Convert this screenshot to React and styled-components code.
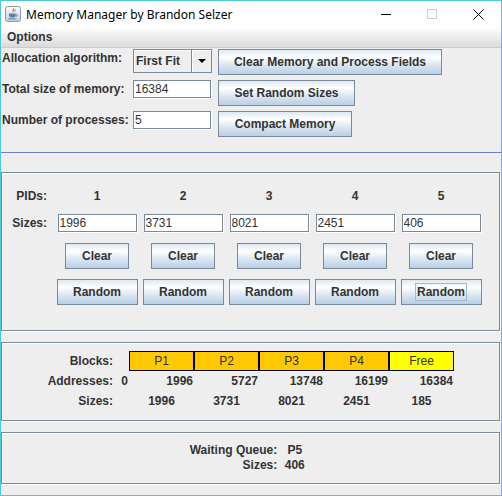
import React from "react";
import styled, { createGlobalStyle } from "styled-components";

const GlobalStyle = createGlobalStyle`
  html, body {
    margin: 0;
    padding: 0;
    background: #ffffff;
  }
  body {
    font-family: "Liberation Sans", Arial, sans-serif;
  }
  * {
    box-sizing: border-box;
  }
`;

const Window = styled.div`
  width: 502px;
  height: 496px;
  border: 1px solid #4fc9d3;
  background: #eeeeee;
  display: flex;
  flex-direction: column;
  overflow: hidden;
  color: #333333;
  font-size: 12px;
`;

const TitleBar = styled.div`
  height: 26px;
  flex-shrink: 0;
  background: #ffffff;
  display: flex;
  align-items: center;
`;

const AppIcon = styled.svg`
  margin-left: 4px;
  flex-shrink: 0;
`;

const TitleText = styled.span`
  flex: 1;
  margin-left: 5px;
  font-family: "Noto Sans", "Open Sans", sans-serif;
  font-size: 12px;
  color: #000000;
  white-space: nowrap;
`;

const CaptionButton = styled.div`
  width: 46px;
  height: 26px;
  display: flex;
  align-items: center;
  justify-content: center;
`;

const MenuBar = styled.div`
  height: 21px;
  flex-shrink: 0;
  background: linear-gradient(#ffffff, #dadada);
  border-bottom: 1px solid #cccccc;
  display: flex;
  align-items: center;
`;

const MenuItem = styled.span`
  padding-left: 6px;
  font-weight: bold;
  font-size: 12px;
  color: #333333;
`;

const Content = styled.div`
  flex: 1;
  display: flex;
  flex-direction: column;
  padding-top: 1px;
`;

const TopRow = styled.div`
  display: flex;
  align-items: flex-start;
  height: 31px;
  padding-left: 1px;
`;

const TopLabel = styled.div`
  width: 131px;
  line-height: 19px;
  font-weight: bold;
  white-space: nowrap;
`;

const Combo = styled.div`
  width: 79px;
  height: 24px;
  margin-right: 6px;
  border: 1px solid #7a8a99;
  background: #eeeeee;
  display: flex;
`;

const ComboValue = styled.div`
  flex: 1;
  padding-left: 2px;
  line-height: 22px;
  font-weight: bold;
  box-shadow: inset 1px 1px 0 #ffffff;
  border-right: 1px solid #7a8a99;
`;

const ComboArrow = styled.div`
  width: 19px;
  display: flex;
  align-items: center;
  justify-content: center;
  box-shadow: inset 1px 1px 0 #ffffff;
`;

const Field = styled.input`
  width: ${(p) => p.$w || 78}px;
  height: 18px;
  margin: 0 ${(p) => p.$mr || 0}px 0 0;
  padding: 0 1px;
  border: 1px solid #7a8a99;
  box-shadow: 1px 1px 0 #ffffff;
  background: #ffffff;
  outline: none;
  font-family: "Liberation Sans", Arial, sans-serif;
  font-size: 12px;
  color: #333333;
`;

const Button = styled.button`
  width: ${(p) => p.$w}px;
  height: 26px;
  padding: 0;
  border: 1px solid #7a8a99;
  border-radius: 0;
  background: linear-gradient(#dde8f3 0%, #ffffff 30%, #dde8f3 60%, #b8cfe5 100%);
  font-family: "Liberation Sans", Arial, sans-serif;
  font-size: 12px;
  font-weight: bold;
  color: #333333;
  display: flex;
  align-items: center;
  justify-content: center;
`;

const FocusRing = styled.span`
  border: 1px solid #a3b8cc;
  padding: 1px 1px;
  line-height: 14px;
`;

const Separator = styled.div`
  height: 1px;
  margin-top: 10px;
  background: #6382bf;
`;

const Panel = styled.div`
  width: 499px;
  height: ${(p) => p.$h}px;
  margin-top: ${(p) => p.$mt}px;
  padding-top: ${(p) => p.$pt}px;
  border: 1px solid #7a8a99;
  box-shadow: inset 1px 1px 0 #ffffff, 1px 1px 0 #ffffff;
  display: flex;
  flex-direction: column;
`;

const GridRow = styled.div`
  display: grid;
  grid-template-columns: 52px repeat(5, 86px);
  align-items: center;
  justify-items: center;
  height: ${(p) => p.$h}px;
  margin-top: ${(p) => p.$mt || 0}px;
`;

const RowLabel = styled.div`
  justify-self: stretch;
  text-align: right;
  padding-right: 7px;
  font-weight: bold;
`;

const Bold = styled.span`
  font-weight: bold;
`;

const MapRow = styled.div`
  display: flex;
  align-items: center;
  height: 20px;
  line-height: 20px;
`;

const MapLabel = styled.div`
  width: 111px;
  text-align: right;
  font-weight: bold;
`;

const LeadCell = styled.div`
  width: 16px;
  text-align: right;
  padding-right: 1px;
  font-weight: bold;
`;

const Block = styled.div`
  width: 65px;
  height: 20px;
  border: 1px solid #000000;
  background: ${(p) => p.$color};
  text-align: center;
  line-height: 18px;
`;

const AddrCell = styled.div`
  width: 65px;
  text-align: right;
  padding-right: 1px;
  font-weight: bold;
`;

const SizeCell = styled.div`
  width: 65px;
  text-align: center;
  font-weight: bold;
`;

const QueueGrid = styled.div`
  display: grid;
  grid-template-columns: auto 33px;
  column-gap: 1px;
  justify-content: center;
  line-height: 15px;
  font-weight: bold;
`;

const QueueLabel = styled.div`
  text-align: right;
`;

const QueueValue = styled.div`
  text-align: center;
`;

const sizes = [1996, 3731, 8021, 2451, 406];

const blocks = [
  { label: "P1", color: "#ffc800", addr: 1996, size: 1996 },
  { label: "P2", color: "#ffc800", addr: 5727, size: 3731 },
  { label: "P3", color: "#ffc800", addr: 13748, size: 8021 },
  { label: "P4", color: "#ffc800", addr: 16199, size: 2451 },
  { label: "Free", color: "#ffff00", addr: 16384, size: 185 },
];

const JavaIcon = () => (
  <AppIcon width="16" height="16" viewBox="0 0 16 16">
    <defs>
      <linearGradient id="jframe" x1="0" y1="0" x2="0" y2="1">
        <stop offset="0" stopColor="#fbfcfd" />
        <stop offset="1" stopColor="#c6d0dc" />
      </linearGradient>
    </defs>
    <rect x="0.5" y="0.5" width="15" height="15" rx="2" fill="url(#jframe)" stroke="#8b99aa" />
    <path d="M8.6 2.4c1.2 1.1-1.6 2.1-.4 3.6" stroke="#e0531f" fill="none" strokeWidth="1.1" />
    <path d="M10.2 3.4c.8.9-1 1.5-.2 2.5" stroke="#e76f00" fill="none" strokeWidth="0.9" />
    <path d="M4 7.6h6.6v1.6c0 1.5-1.4 2.4-3.3 2.4S4 10.7 4 9.2z" fill="#5b7fa0" />
    <path d="M10.6 8.2h.8a1 1 0 0 1 0 2h-1" stroke="#5b7fa0" fill="none" strokeWidth="0.9" />
    <path d="M3.2 12.9h8.4" stroke="#5b7fa0" strokeWidth="1" />
  </AppIcon>
);

const App = () => {
  return (
    <>
      <GlobalStyle />
      <Window>
        <TitleBar>
          <JavaIcon />
          <TitleText>Memory Manager by Brandon Selzer</TitleText>
          <CaptionButton>
            <svg width="10" height="10" viewBox="0 0 10 10">
              <path d="M0 5.5h10" stroke="#000" strokeWidth="1" />
            </svg>
          </CaptionButton>
          <CaptionButton>
            <svg width="10" height="10" viewBox="0 0 10 10">
              <rect x="0.5" y="0.5" width="9" height="9" fill="none" stroke="#cccccc" />
            </svg>
          </CaptionButton>
          <CaptionButton>
            <svg width="11" height="11" viewBox="0 0 11 11">
              <path d="M0.5 0.5l10 10M10.5 0.5l-10 10" stroke="#000" strokeWidth="1" />
            </svg>
          </CaptionButton>
        </TitleBar>
        <MenuBar>
          <MenuItem>Options</MenuItem>
        </MenuBar>
        <Content>
          <TopRow>
            <TopLabel>Allocation algorithm:</TopLabel>
            <Combo>
              <ComboValue>First Fit</ComboValue>
              <ComboArrow>
                <svg width="8" height="4" viewBox="0 0 8 4">
                  <path d="M0 0h8L4 4z" fill="#000" />
                </svg>
              </ComboArrow>
            </Combo>
            <Button $w={224}>Clear Memory and Process Fields</Button>
          </TopRow>
          <TopRow>
            <TopLabel>Total size of memory:</TopLabel>
            <Field $mr={7} readOnly value="16384" />
            <Button $w={137}>Set Random Sizes</Button>
          </TopRow>
          <TopRow>
            <TopLabel>Number of processes:</TopLabel>
            <Field $mr={7} readOnly value="5" />
            <Button $w={134}>Compact Memory</Button>
          </TopRow>
          <Separator />

          <Panel $h={159} $mt={19} $pt={15}>
            <GridRow $h={16}>
              <RowLabel>PIDs:</RowLabel>
              {sizes.map((_, i) => (
                <Bold key={i}>{i + 1}</Bold>
              ))}
            </GridRow>
            <GridRow $h={19} $mt={9}>
              <RowLabel>Sizes:</RowLabel>
              {sizes.map((s, i) => (
                <Field key={i} $w={79} readOnly value={String(s)} />
              ))}
            </GridRow>
            <GridRow $h={26} $mt={11}>
              <span />
              {sizes.map((_, i) => (
                <Button key={i} $w={64}>
                  Clear
                </Button>
              ))}
            </GridRow>
            <GridRow $h={26} $mt={10}>
              <span />
              {sizes.map((_, i) => (
                <Button key={i} $w={81}>
                  {i === sizes.length - 1 ? <FocusRing>Random</FocusRing> : "Random"}
                </Button>
              ))}
            </GridRow>
          </Panel>

          <Panel $h={79} $mt={11} $pt={8}>
            <MapRow>
              <MapLabel>Blocks:</MapLabel>
              <LeadCell />
              {blocks.map((b) => (
                <Block key={b.label} $color={b.color}>
                  {b.label}
                </Block>
              ))}
            </MapRow>
            <MapRow>
              <MapLabel>Addresses:</MapLabel>
              <LeadCell>0</LeadCell>
              {blocks.map((b) => (
                <AddrCell key={b.label}>{b.addr}</AddrCell>
              ))}
            </MapRow>
            <MapRow>
              <MapLabel>Sizes:</MapLabel>
              <LeadCell />
              {blocks.map((b) => (
                <SizeCell key={b.label}>{b.size}</SizeCell>
              ))}
            </MapRow>
          </Panel>

          <Panel $h={52} $mt={11} $pt={10}>
            <QueueGrid>
              <QueueLabel>Waiting Queue:</QueueLabel>
              <QueueValue>P5</QueueValue>
              <QueueLabel>Sizes:</QueueLabel>
              <QueueValue>406</QueueValue>
            </QueueGrid>
          </Panel>
        </Content>
      </Window>
    </>
  );
};

export default App;
